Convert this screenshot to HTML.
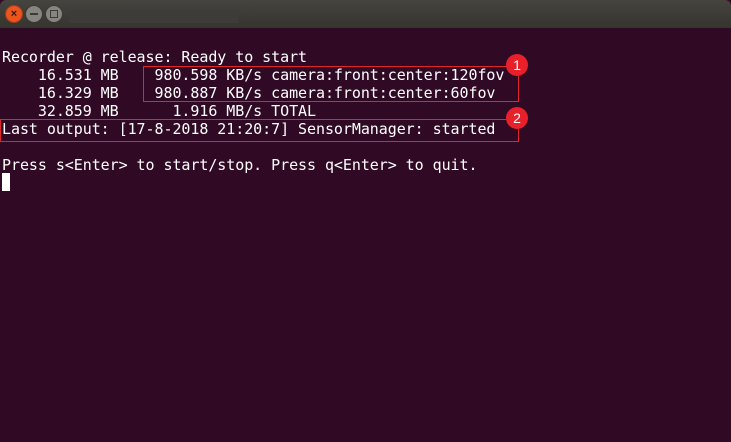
<!DOCTYPE html>
<html><head><style>
body{margin:0;width:731px;height:442px;overflow:hidden;background:#300a24;position:relative;font-family:"Liberation Mono",monospace}
.tb{position:absolute;left:0;top:0;width:731px;height:28px;background:linear-gradient(#45443f,#35342f);border-radius:6px 6px 0 0}
.btn{position:absolute;top:5px;width:16px;height:16px;border-radius:50%;}
.ttl{position:absolute;left:69px;top:10px;width:169px;height:13px;background:#3d3c38}
pre{position:absolute;left:2px;top:48px;margin:0;font-size:15px;line-height:18px;color:#fff;letter-spacing:-0.06px}
.box{position:absolute;border:1px solid #e0262b}
.c{position:absolute;width:22px;height:22px;border-radius:50%;background:#e8202a;color:#fff;font-family:"Liberation Sans",sans-serif;font-size:14px;text-align:center;line-height:22px}
.cur{position:absolute;left:2px;top:173px;width:8px;height:18px;background:#fff}
</style></head><body>
<div class="tb">
<div class="btn" style="left:5px;background:#e9541f;border:1px solid #a03c16;color:#3a1808;font:bold 11px 'Liberation Sans',sans-serif;text-align:center;line-height:16px">×</div>
<div class="btn" style="left:25px;background:#86857f;border:1px solid #3a3935"><div style="position:absolute;left:4px;top:7px;width:8px;height:2px;background:#3c3b37"></div></div>
<div class="btn" style="left:45px;background:#86857f;border:1px solid #3a3935"><div style="position:absolute;left:4px;top:4px;width:6px;height:6px;border:1px solid #3c3b37"></div></div>
<div class="ttl"></div>
</div>
<pre>Recorder @ release: Ready to start
    16.531 MB    980.598 KB/s camera:front:center:120fov
    16.329 MB    980.887 KB/s camera:front:center:60fov
    32.859 MB      1.916 MB/s TOTAL
Last output: [17-8-2018 21:20:7] SensorManager: started

Press s&lt;Enter&gt; to start/stop. Press q&lt;Enter&gt; to quit.</pre>
<div class="box" style="left:143px;top:66px;width:374px;height:34px"></div>
<div class="box" style="left:0;top:119px;width:517px;height:21px"></div>
<div class="c" style="left:506px;top:54px">1</div>
<div class="c" style="left:506px;top:107px">2</div>
<div class="cur"></div>
</body></html>
